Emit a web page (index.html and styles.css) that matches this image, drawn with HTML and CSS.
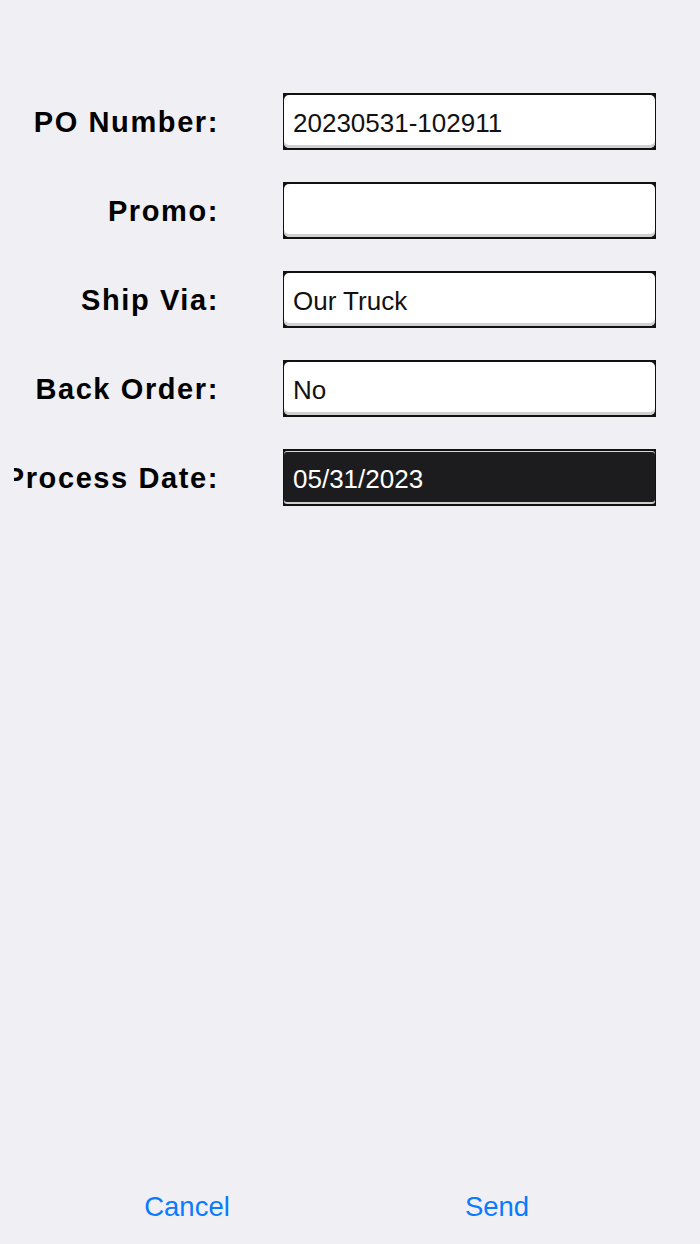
FILE: index.html
```html
<!DOCTYPE html>
<html lang="en">
<head>
  <meta charset="UTF-8" />
  <meta name="viewport" content="width=device-width, initial-scale=1.0" />
  <title>Order Details</title>
  <link rel="stylesheet" href="styles.css">
</head>
<body>
  <form class="order-form" id="orderForm">
    <div class="row">
      <label class="label" for="poNumber">PO Number:</label>
      <div class="field">
        <input id="poNumber" name="PONumber" value="20230531-102911" />
      </div>
    </div>
    <div class="row">
      <label class="label" for="promo">Promo:</label>
      <div class="field">
        <input id="promo" name="Promo" value="" />
      </div>
    </div>
    <div class="row">
      <label class="label" for="shipVia">Ship Via:</label>
      <div class="field">
        <input id="shipVia" name="ShipVia" value="Our Truck" />
      </div>
    </div>
    <div class="row">
      <label class="label" for="backOrder">Back Order:</label>
      <div class="field">
        <input id="backOrder" name="BackOrder" value="No" />
      </div>
    </div>
    <div class="row">
      <label class="label" for="processDate">Process Date:</label>
      <div class="field dark">
        <input id="processDate" name="ProcessDate" value="05/31/2023" />
      </div>
    </div>
  </form>

  <div class="actions">
    <button type="button" class="action">Cancel</button>
    <button type="submit" form="orderForm" class="action">Send</button>
  </div>
</body>
</html>
```

FILE: styles.css
```css
html, body {
  height: 100%;
}

body {
  margin: 0;
  background: #efeff4;
  font-family: 'Liberation Sans', Arial, sans-serif;
  color: #000;
  display: flex;
  flex-direction: column;
}

.order-form {
  flex: 1;
  padding-top: 93px;
  display: flex;
  flex-direction: column;
  gap: 32px;
}

.row {
  display: flex;
  align-items: center;
  height: 57px;
}

.label {
  width: 205px;
  margin-left: 14px;
  padding-top: 2px;
  overflow: hidden;
  white-space: nowrap;
  display: flex;
  justify-content: flex-end;
  font-size: 29px;
  font-weight: bold;
  letter-spacing: 1.6px;
  margin-right: 64px;
}

.field {
  width: 371px;
  height: 53px;
  padding: 2px 1px;
  background: #111;
  display: flex;
}

.field input {
  flex: 1;
  min-width: 0;
  border: none;
  outline: none;
  border-radius: 5px;
  background: #fff;
  box-shadow: inset 0 -3px 0 #d0d0d0;
  padding: 3px 0 0 9px;
  font-family: inherit;
  font-size: 26px;
  color: #111;
}

.field.dark input {
  background: #1c1c1e;
  color: #fff;
  border-radius: 3px;
  box-shadow: inset 0 1px 0 #d8d8d8, inset 0 -2px 0 #cfcfcf;
}

.actions {
  height: 74px;
  display: flex;
  align-items: center;
  padding-left: 32px;
}

.action {
  width: 310px;
  background: none;
  border: none;
  padding: 0;
  font-family: inherit;
  font-size: 27.5px;
  color: #0a7aff;
  cursor: pointer;
}
```
